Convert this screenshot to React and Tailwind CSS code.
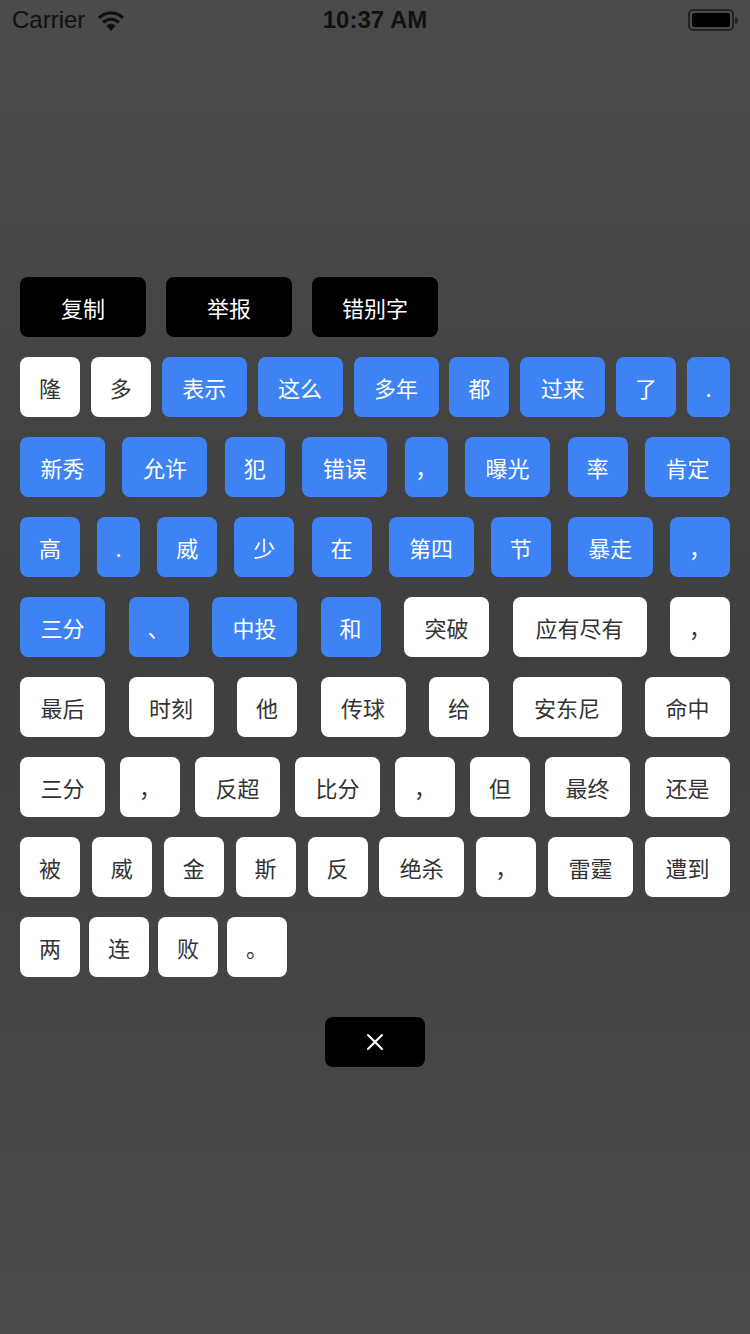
import { X } from "lucide-react";

const FONT = { fontFamily: '"Noto Sans CJK SC", "Liberation Sans", sans-serif' };

// [text, width, blue]
const rows = [
  [["隆", 60], ["多", 60], ["表示", 85, 1], ["这么", 85, 1], ["多年", 85, 1], ["都", 60, 1], ["过来", 85, 1], ["了", 60, 1], [".", 43, 1]],
  [["新秀", 85, 1], ["允许", 85, 1], ["犯", 60, 1], ["错误", 85, 1], ["，", 43, 1], ["曝光", 85, 1], ["率", 60, 1], ["肯定", 85, 1]],
  [["高", 60, 1], [".", 43, 1], ["威", 60, 1], ["少", 60, 1], ["在", 60, 1], ["第四", 85, 1], ["节", 60, 1], ["暴走", 85, 1], ["，", 60, 1]],
  [["三分", 85, 1], ["、", 60, 1], ["中投", 85, 1], ["和", 60, 1], ["突破", 85], ["应有尽有", 134], ["，", 60]],
  [["最后", 85], ["时刻", 85], ["他", 60], ["传球", 85], ["给", 60], ["安东尼", 109], ["命中", 85]],
  [["三分", 85], ["，", 60], ["反超", 85], ["比分", 85], ["，", 60], ["但", 60], ["最终", 85], ["还是", 85]],
  [["被", 60], ["威", 60], ["金", 60], ["斯", 60], ["反", 60], ["绝杀", 85], ["，", 60], ["雷霆", 85], ["遭到", 85]],
];
const lastRow = [["两", 60], ["连", 60], ["败", 60], ["。", 60]];

function Chip({ t, w, blue }) {
  return (
    <div
      className={`h-[60px] rounded-[8px] flex items-center justify-center text-[22px] leading-none shrink-0 ${
        blue ? "bg-[#3d83f5] text-white" : "bg-white text-[#333]"
      }`}
      style={{ width: w }}
    >
      {t}
    </div>
  );
}

function StatusBar() {
  return (
    <div className="h-[40px] px-[12px] flex items-center justify-between text-[#111] relative" style={{ fontFamily: '"Liberation Sans", sans-serif' }}>
      <div className="flex items-center gap-[11px] text-[24px]">
        <span>Carrier</span>
        <svg width="30" height="23" viewBox="0 0 28 22">
          <path d="M14 21 L9.5 16 A6.5 6.5 0 0 1 18.5 16 Z" fill="#111" />
          <path d="M6.5 12.8 A11 11 0 0 1 21.5 12.8" stroke="#111" strokeWidth="3" fill="none" />
          <path d="M2.5 8.5 A16.5 16.5 0 0 1 25.5 8.5" stroke="#111" strokeWidth="3" fill="none" />
        </svg>
      </div>
      <div className="absolute left-0 right-0 text-center text-[24px] font-semibold pointer-events-none">10:37 AM</div>
      <div className="flex items-center">
        <div className="w-[46px] h-[22px] rounded-[5px] border-2 border-[#222] p-[2px]">
          <div className="w-full h-full rounded-[2px] bg-black" />
        </div>
        <div className="w-[3px] h-[7px] rounded-r bg-[#222] ml-[1px]" />
      </div>
    </div>
  );
}

export default function App() {
  return (
    <div
      className="w-[750px] h-[1334px] overflow-hidden bg-[#444] bg-gradient-to-b from-[#4b4b4b] via-[#3f3f3f] to-[#4a4a4a]"
      style={FONT}
    >
      <StatusBar />
      <div className="pt-[237px] px-[20px]">
        <div className="flex gap-[20px]">
          {["复制", "举报", "错别字"].map((t) => (
            <div key={t} className="w-[126px] h-[60px] rounded-[8px] bg-black text-white text-[22px] leading-none flex items-center justify-center">
              {t}
            </div>
          ))}
        </div>
        <div className="mt-[20px] flex flex-col gap-[20px]">
          {rows.map((r, i) => (
            <div key={i} className="flex justify-between">
              {r.map(([t, w, b], j) => (
                <Chip key={j} t={t} w={w} blue={b} />
              ))}
            </div>
          ))}
          <div className="flex gap-[9px]">
            {lastRow.map(([t, w], j) => (
              <Chip key={j} t={t} w={w} />
            ))}
          </div>
        </div>
        <div className="mt-[40px] flex justify-center">
          <div className="w-[100px] h-[50px] rounded-[8px] bg-black flex items-center justify-center">
            <X size={28} color="white" strokeWidth={1.8} />
          </div>
        </div>
      </div>
    </div>
  );
}
